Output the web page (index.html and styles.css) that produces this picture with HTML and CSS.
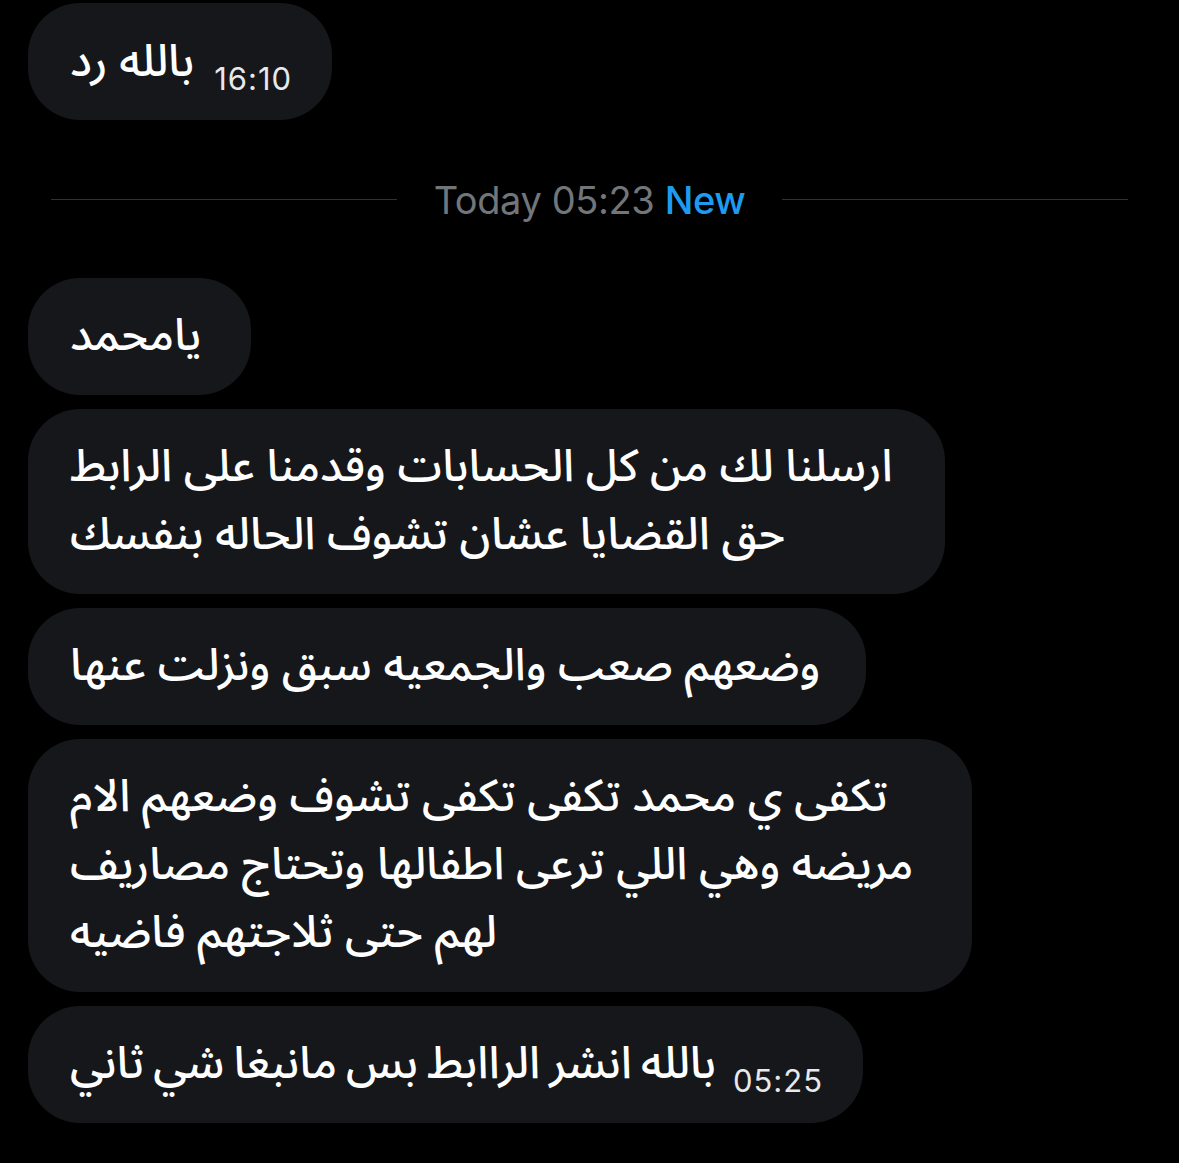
FILE: index.html
```html
<!DOCTYPE html>
<html lang="ar">
<head>
<meta charset="utf-8">
<title>Chat</title>
<link rel="stylesheet" href="styles.css">
</head>
<body>
<main class="chat">
  <div class="bubble b1">
    <span class="msg" dir="rtl">بالله رد</span>
    <span class="time">16:10</span>
  </div>

  <div class="divider">
    <span class="rule"></span>
    <span class="label">Today 05:23 <span class="new">New</span></span>
    <span class="rule"></span>
  </div>

  <div class="bubble b2">
    <span class="msg" dir="rtl">يامحمد</span>
  </div>
  <div class="bubble b3">
    <span class="msg" dir="rtl">ارسلنا لك من كل الحسابات وقدمنا على الرابط<br>حق القضايا عشان تشوف الحاله بنفسك</span>
  </div>
  <div class="bubble b4">
    <span class="msg" dir="rtl">وضعهم صعب والجمعيه سبق ونزلت عنها</span>
  </div>
  <div class="bubble b5">
    <span class="msg" dir="rtl">تكفى ي محمد تكفى تكفى تشوف وضعهم الام<br>مريضه وهي اللي ترعى اطفالها وتحتاج مصاريف<br>لهم حتى ثلاجتهم فاضيه</span>
  </div>
  <div class="bubble b6">
    <span class="msg tight" dir="rtl">بالله انشر الراابط بس مانبغا شي ثاني</span>
    <span class="time">05:25</span>
  </div>
</main>
</body>
</html>
```
FILE: styles.css
```css
html, body {
  margin: 0;
  padding: 0;
  background: #000;
}

body {
  width: 1179px;
  height: 1163px;
  overflow: hidden;
  font-family: "Noto Sans Arabic", "Noto Naskh Arabic", "DejaVu Sans", sans-serif;
  color: #fff;
}

.chat {
  display: flex;
  flex-direction: column;
  align-items: flex-start;
  padding: 3px 0 0 28px;
}

.bubble {
  box-sizing: border-box;
  display: flex;
  align-items: flex-end;
  gap: 20px;
  background: #16171a;
  border-radius: 52px;
  padding: 24.5px 42px;
  margin-bottom: 14px;
}

.msg {
  font-size: 44.8px;
  font-weight: 500;
  line-height: 68px;
  text-align: left;
  white-space: nowrap;
  color: #fff;
}

.msg.tight {
  word-spacing: -2.5px;
}

.time {
  font-family: Inter, "Liberation Sans", sans-serif;
  font-size: 31px;
  line-height: 35px;
  color: #e7e9ea;
  letter-spacing: 1px;
}

.b6 { gap: 17px; }

.b1 { width: 304px; }
.b2 { width: 223px; }
.b3 { width: 917px; }
.b4 { width: 838px; }
.b5 { width: 944px; }
.b6 { width: 835px; }

.divider {
  box-sizing: border-box;
  width: 1123px;
  margin: 42.5px 0 55px 0;
  padding: 0 23px;
  display: flex;
  align-items: center;
}

.rule {
  flex: 1;
  height: 1px;
  background: #2f3336;
}

.label {
  margin: 0 37px;
  font-family: Inter, "Liberation Sans", sans-serif;
  font-size: 38px;
  line-height: 46px;
  color: #71767b;
  letter-spacing: -0.4px;
}

.new {
  color: #1d9bf0;
  font-weight: 500;
}
```
